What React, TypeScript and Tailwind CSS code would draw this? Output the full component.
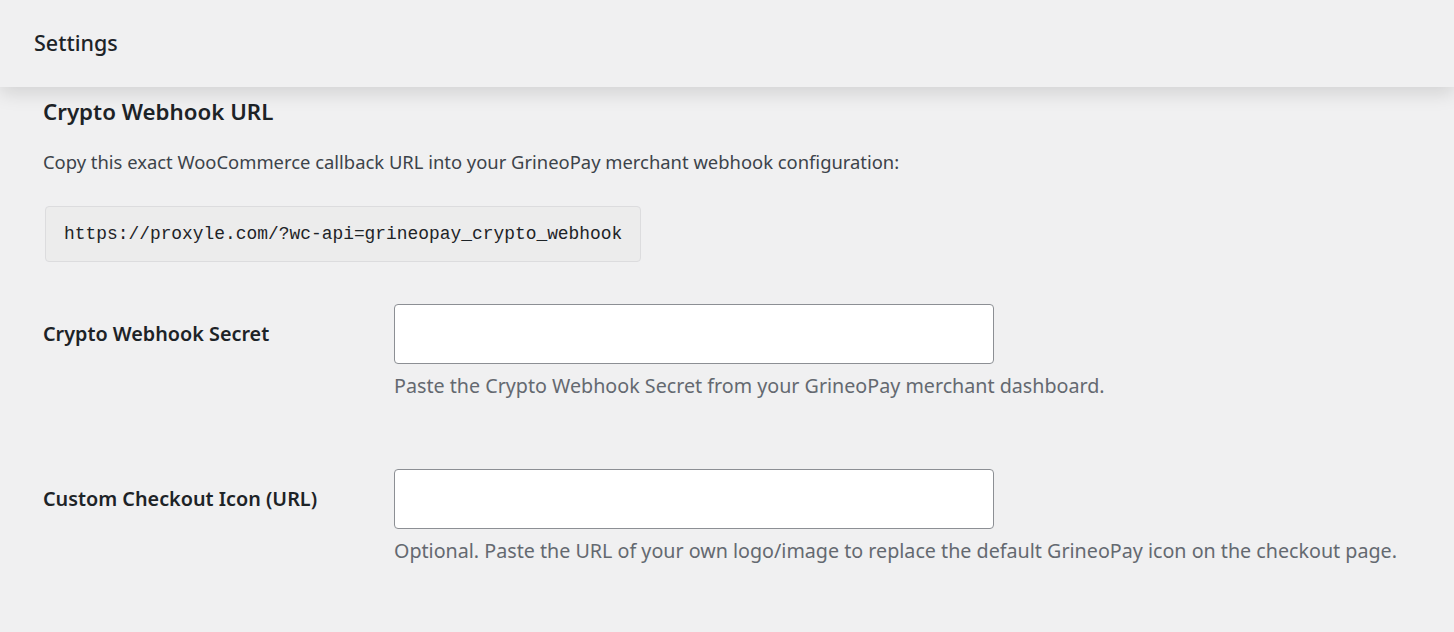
import React from 'react';

const sans = "font-['Noto_Sans','Open_Sans',sans-serif]";

interface FieldRowProps {
  label: string;
  help: string;
}

const FieldRow: React.FC<FieldRowProps> = ({ label, help }) => {
  return (
    <div className="flex">
      <div className="w-[351px] shrink-0 h-[60px] flex items-center">
        <label className="text-[19.8px] font-semibold text-[#1d2327]">{label}</label>
      </div>
      <div className="flex flex-col">
        <input
          type="text"
          className="w-[600px] h-[60px] bg-white border border-[#8c8f94] rounded-[4px] px-3 outline-none"
        />
        <p className="mt-[8px] text-[19.7px] leading-[28px] text-[#646970] whitespace-nowrap">{help}</p>
      </div>
    </div>
  );
};

export default function App() {
  return (
    <div className={`min-h-screen bg-[#f0f0f1] ${sans}`}>
      {/* top bar */}
      <header className="relative z-10 h-[87px] bg-[#f0f0f1] px-[34px] flex items-center shadow-[0_6px_18px_rgba(0,0,0,0.13)]">
        <h1 className="text-[21.5px] font-medium text-[#1d2327]">Settings</h1>
      </header>

      <main className="px-[43px] pt-[10px]">
        <h2 className="text-[22.3px] leading-[30px] font-semibold text-[#1d2327]">Crypto Webhook URL</h2>
        <p className="mt-[21px] text-[18.4px] leading-[28px] text-[#3c434a]">
          Copy this exact WooCommerce callback URL into your GrineoPay merchant webhook configuration:
        </p>

        <div className="mt-[30px] ml-[2px] inline-flex items-center h-[56px] px-[18px] bg-[#ececec] border border-[#dcdcde] rounded-[4px]">
          <code className="font-['Liberation_Mono','DejaVu_Sans_Mono',monospace] text-[17.9px] text-[#1d2327]">
            https://proxyle.com/?wc-api=grineopay_crypto_webhook
          </code>
        </div>

        <div className="mt-[42px] flex flex-col gap-[69px]">
          <FieldRow
            label="Crypto Webhook Secret"
            help="Paste the Crypto Webhook Secret from your GrineoPay merchant dashboard."
          />
          <FieldRow
            label="Custom Checkout Icon (URL)"
            help="Optional. Paste the URL of your own logo/image to replace the default GrineoPay icon on the checkout page."
          />
        </div>
      </main>
    </div>
  );
}
